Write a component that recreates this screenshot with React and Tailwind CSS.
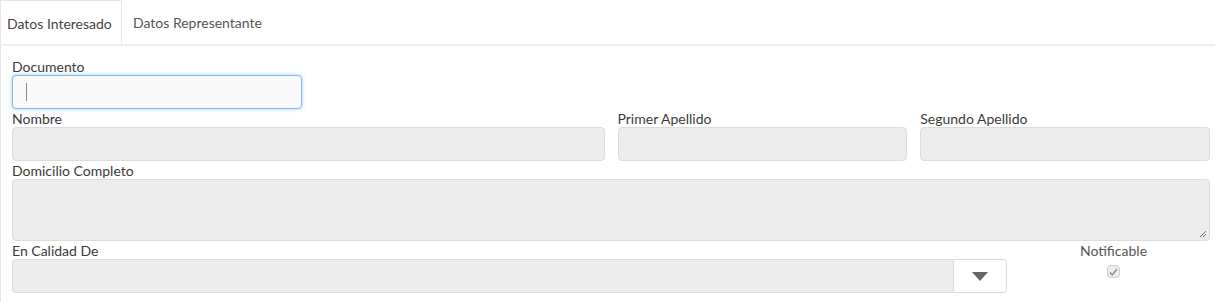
import React from 'react';

const font = { fontFamily: 'Lato, "Open Sans", sans-serif' };

function Label({ children, className = '' }) {
  return <div className={`h-4 leading-4 text-[14px] text-[#3a3a3a] ${className}`}>{children}</div>;
}

function Field({ label, className = '' }) {
  return (
    <div className={className}>
      <Label>{label}</Label>
      <div className="h-[34px] rounded bg-[#ececec] border border-[#dcdcdc]" />
    </div>
  );
}

export default function App() {
  return (
    <div className="w-[1215px] h-[302px] bg-white overflow-hidden" style={font}>
      <div className="flex h-[46px] border-b-2 border-[#eeeeee]">
        <div className="w-[122px] border-l border-t border-r border-[#e6e6e6] flex items-center pl-[6px] pt-[1px] text-[14px] text-[#444]">
          Datos Interesado
        </div>
        <div className="px-[11px] flex items-center pt-[1px] text-[14px] text-[#555]">Datos Representante</div>
      </div>

      <div className="border-l border-[#e6e6e6] h-full pl-[11px] pr-[5px] pt-[13px]">
        <div className="w-[290px]">
          <Label>Documento</Label>
          <div className="h-[34px] rounded border border-[#8ab8ea] bg-[#f9f9f9] shadow-[0_0_4px_rgba(102,175,233,0.6)] flex items-center pl-[13px]">
            <div className="w-px h-[18px] bg-[#888]" />
          </div>
        </div>

        <div className="grid grid-cols-4 gap-x-[13px] mt-[2px]">
          <Field label="Nombre" className="col-span-2" />
          <Field label="Primer Apellido" />
          <Field label="Segundo Apellido" />
        </div>

        <div className="mt-[2px]">
          <Label>Domicilio Completo</Label>
          <div className="relative h-[62px] rounded bg-[#ececec] border border-[#dcdcdc]">
            <svg className="absolute right-[2px] bottom-[2px]" width="8" height="8" viewBox="0 0 8 8">
              <path d="M1 7 L7 1 M4 7 L7 4" stroke="#777" strokeWidth="1" />
            </svg>
          </div>
        </div>

        <div className="flex mt-[2px]">
          <div className="w-[995px]">
            <Label>En Calidad De</Label>
            <div className="flex h-[34px]">
              <div className="flex-1 bg-[#ececec] border border-[#dcdcdc] rounded-l" />
              <div className="w-[53px] bg-white border border-l-0 border-[#dcdcdc] rounded-r flex items-center justify-center">
                <svg width="16" height="9" viewBox="0 0 16 9">
                  <path d="M0 0 H16 L8 9 Z" fill="#666" />
                </svg>
              </div>
            </div>
          </div>
          <div className="flex-1 flex flex-col items-center pl-[10px]">
            <Label className="text-[#555]">Notificable</Label>
            <div className="mt-[6px] w-[13px] h-[13px] rounded-sm border border-[#ccc] bg-[#eee] flex items-center justify-center">
              <svg width="9" height="8" viewBox="0 0 9 8">
                <path d="M1 4.5 L3.3 6.8 L8 1.2" stroke="#999" strokeWidth="1.8" fill="none" />
              </svg>
            </div>
          </div>
        </div>
      </div>
    </div>
  );
}
